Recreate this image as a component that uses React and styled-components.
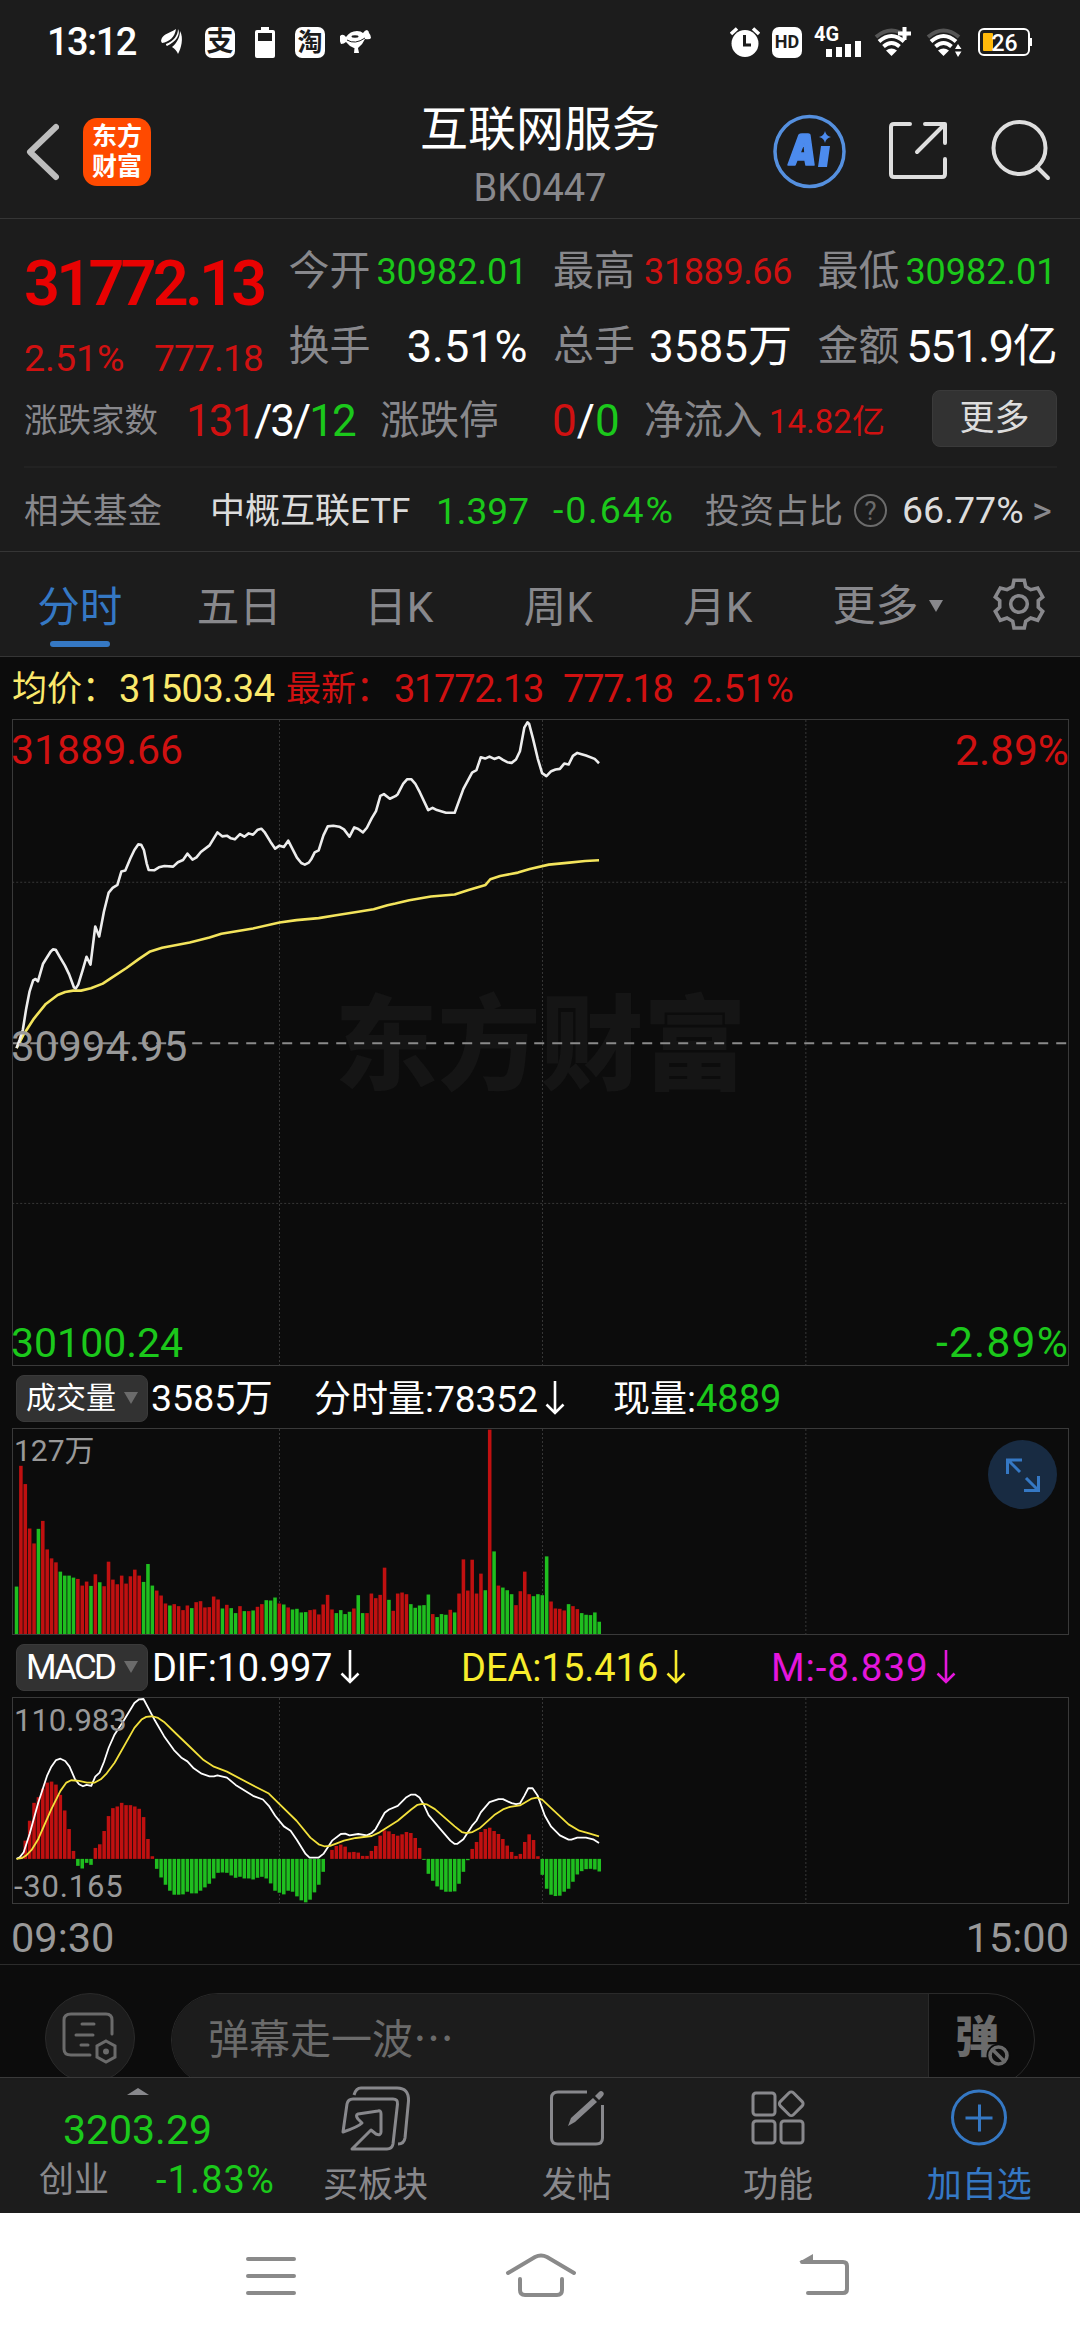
import React, { useState } from "react";
import styled, { createGlobalStyle } from "styled-components";

const red = "#d01111";
const green = "#1bc81b";
const grey = "#88888c";
const blue = "#3578c4";
const line = "#3a3a3a";

const GlobalStyle = createGlobalStyle`
  * {
    box-sizing: border-box;
  }

  body {
    margin: 0;
    background: #0c0c0c;
    font-family: Roboto, "Noto Sans CJK SC", sans-serif;
    color: #fff;
  }

  svg {
    display: block;
    flex: none;
  }
`;

const Screen = styled.div`
  width: 1080px;
  height: 2340px;
  display: flex;
  flex-direction: column;
  overflow: hidden;
`;

const Txt = styled.span`
  display: inline-block;
  padding-top: 2px;
  color: ${(p) => p.$color || "inherit"};
  font-size: ${(p) => p.$size || 38}px;
  font-weight: ${(p) => p.$weight || 400};
  letter-spacing: ${(p) => p.$track || 0}px;
  line-height: 1;
  white-space: pre;
`;

/* status bar */

const StatusBar = styled.div`
  height: 84px;
  flex: none;
  padding: 0 48px 0 47px;
  display: flex;
  align-items: center;
  justify-content: space-between;
  background: #1c1c1c;
`;

const StatusGroup = styled.div`
  display: flex;
  align-items: center;
  gap: ${(p) => p.$gap}px;
`;

const Clock = styled(Txt)`
  padding-top: 0;
  margin-right: 5px;
`;

const Chip = styled.span`
  width: 30px;
  height: 31px;
  border-radius: 7px;
  background: #fff;
  color: #1c1c1c;
  display: flex;
  align-items: center;
  justify-content: center;
  font-size: ${(p) => p.$size}px;
  font-weight: 700;
  line-height: 1;
`;

const DogIcon = styled.svg`
  margin-left: -5px;
`;

const WifiIcon = styled.svg`
  margin-right: 3px;
`;

/* header */

const Header = styled.header`
  height: 135px;
  flex: none;
  display: grid;
  grid-template-columns: 400px 280px 400px;
  background: #1c1c1c;
  border-bottom: 1px solid #353535;
`;

const HeaderLeft = styled.div`
  display: flex;
  gap: 24px;
  padding: 34px 0 0 26px;
`;

const Logo = styled.div`
  width: 68px;
  height: 68px;
  border-radius: 14px;
  background: #ff4a00;
  display: flex;
  align-items: center;
  justify-content: center;
  font-size: 25px;
  font-weight: 700;
  line-height: 30px;
  text-align: center;
`;

const Titles = styled.div`
  display: flex;
  flex-direction: column;
  align-items: center;
  gap: 13px;
  padding-top: 20px;
`;

const HeaderRight = styled.div`
  display: flex;
  justify-content: flex-end;
  gap: 42px;
  padding: 30px 29px 0 0;
`;

/* quote panel */

const Quote = styled.section`
  height: 333px;
  flex: none;
  padding: 0 23px 0 24px;
  background: #1c1c1c;
  border-bottom: 1px solid #353535;
`;

const QuoteTop = styled.div`
  height: 165px;
  display: grid;
  grid-template-columns: 239px repeat(3, 239px);
  column-gap: 25.5px;
`;

const PriceBlock = styled.div`
  padding-top: 31px;
`;

const ChangeRow = styled.div`
  display: flex;
  justify-content: space-between;
  margin-top: 23px;
`;

const StatColumn = styled.div`
  display: flex;
  flex-direction: column;
  padding-top: 14px;
`;

const Stat = styled.div`
  height: 75px;
  display: flex;
  align-items: center;
  justify-content: space-between;
`;

const QuoteRow = styled.div`
  height: 84px;
  display: flex;
  align-items: center;
  border-bottom: ${(p) => (p.$ruled ? "2px solid #222" : "none")};
  padding-bottom: ${(p) => (p.$ruled ? 10 : 0)}px;
`;

const Cell = styled.div`
  width: ${(p) => p.$w}px;
  margin-left: ${(p) => p.$ml || 0}px;
  flex: none;
  display: flex;
  align-items: center;
`;

const MoreButton = styled.button`
  width: 125px;
  height: 57px;
  margin: -3px 0 0 auto;
  padding: 0;
  border: 1px solid #3a3a3a;
  border-radius: 8px;
  background: #323232;
  color: #ddd;
  font: 35px/53px Roboto, "Noto Sans CJK SC", sans-serif;
`;

const Help = styled.span`
  width: 33px;
  height: 33px;
  border: 2px solid #6b6b6b;
  border-radius: 50%;
  color: #6b6b6b;
  font-size: 26px;
  line-height: 30px;
  text-align: center;
`;

/* period tabs */

const Tabs = styled.nav`
  height: 105px;
  flex: none;
  display: flex;
  background: #1c1c1c;
  border-bottom: 1px solid #353535;
`;

const Tab = styled.button`
  width: 159.5px;
  padding: 35px 0 0;
  border: 0;
  background: none;
  display: flex;
  flex-direction: column;
  align-items: center;
  gap: 12px;
  font: 42.5px/42px Roboto, "Noto Sans CJK SC", sans-serif;
  color: ${(p) => (p.$active ? blue : grey)};

  &::after {
    content: "";
    width: 60px;
    height: 6px;
    border-radius: 3px;
    background: ${(p) => (p.$active ? blue : "transparent")};
  }
`;

const MoreTab = styled.div`
  display: flex;
  align-items: center;
  gap: 10px;
  padding: 4px 0 0 35px;
  font-size: 43px;
  line-height: 43px;
  color: ${grey};
`;

const GearWrap = styled.div`
  margin: 26px 35px 0 auto;
`;

/* charts */

const Legend = styled.div`
  height: ${(p) => p.$h || 62}px;
  flex: none;
  display: flex;
  align-items: center;
  padding: ${(p) => p.$drop || 0}px 0 0 ${(p) => p.$left}px;
`;

const Pill = styled.button`
  width: 132px;
  height: 47px;
  padding: 0 9px 0 9px;
  border: 1px solid #3a3a3a;
  border-radius: 8px;
  background: #323232;
  color: #fff;
  display: flex;
  align-items: center;
  justify-content: space-between;
  font: ${(p) => p.$size}px/1 Roboto, "Noto Sans CJK SC", sans-serif;
  letter-spacing: ${(p) => p.$track || 0}px;
`;

const Triangle = styled.i`
  width: 0;
  border-left: ${(p) => p.$w / 2}px solid transparent;
  border-right: ${(p) => p.$w / 2}px solid transparent;
  border-top: ${(p) => (p.$up ? 0 : p.$h)}px solid ${(p) => p.$color};
  border-bottom: ${(p) => (p.$up ? p.$h : 0)}px solid ${(p) => p.$color};
`;

const Plot = styled.div`
  position: relative;
  height: ${(p) => p.$h}px;
  flex: none;
  margin: 0 11px 0 12px;
  border: 1px solid ${line};

  > svg {
    position: relative;
    width: 100%;
    height: 100%;
  }
`;

const Tag = styled.span`
  position: absolute;
  ${(p) => (p.$right ? "right: -1px;" : `left: ${p.$left || -2}px;`)}
  top: ${(p) => p.$top}px;
  font-size: ${(p) => p.$size}px;
  letter-spacing: ${(p) => p.$track || 0}px;
  line-height: 1;
  color: ${(p) => p.$color};
`;

const Watermark = styled.div`
  position: absolute;
  left: 0;
  right: 0;
  top: 268px;
  text-align: center;
  font-size: 103px;
  font-weight: 900;
  line-height: 1.15;
  color: #151515;
`;

const Expand = styled.button`
  position: absolute;
  top: 11px;
  right: 11px;
  width: 69px;
  height: 69px;
  padding: 0;
  border: 0;
  border-radius: 50%;
  background: #182b42;
  display: grid;
  place-items: center;
`;

const TimeAxis = styled.div`
  height: 61px;
  flex: none;
  display: flex;
  align-items: center;
  justify-content: space-between;
  padding: 5px 11px 0;
  color: #999;
  border-bottom: 1px solid #2c2c2c;
`;

/* comment bar */

const Comments = styled.div`
  height: 112px;
  flex: none;
  overflow: hidden;
  display: flex;
  gap: 36px;
  padding: 28px 45px 0;
`;

const RoundButton = styled.div`
  width: 90px;
  height: 90px;
  border: 1px solid #2a2a2a;
  border-radius: 50%;
  background: #1c1c1c;
  display: grid;
  place-items: center;
`;

const CommentBox = styled.div`
  width: 864px;
  height: 94px;
  display: flex;
  overflow: hidden;
  border: 1px solid #2a2a2a;
  border-radius: 47px;
`;

const CommentInput = styled.div`
  width: 757px;
  padding: 24px 0 0 36px;
  background: #1c1c1c;
  border-right: 1px solid #2a2a2a;
  color: #6b6b6b;
`;

const Barrage = styled.div`
  position: relative;
  padding: 20px 0 0 26px;
  color: #6b6b6b;

  svg {
    position: absolute;
    left: 57px;
    top: 49px;
  }
`;

/* bottom bars */

const BottomBar = styled.div`
  height: 136px;
  flex: none;
  display: grid;
  grid-template-columns: 275px repeat(4, 201.25px);
  background: #1c1c1c;
  border-top: 1px solid #3a3a3a;
`;

const IndexBox = styled.div`
  display: flex;
  flex-direction: column;
  align-items: center;
  gap: 13px;
  padding-top: 10px;
`;

const IndexRow = styled.div`
  width: 236px;
  margin: -5px 0 0 39px;
  display: flex;
  justify-content: space-between;
  align-items: center;
`;

const Action = styled.div`
  display: flex;
  flex-direction: column;
  align-items: center;
  color: ${(p) => p.$color || grey};
  padding-top: 8px;
  gap: 14px;
`;

const SystemNav = styled.div`
  flex: 1;
  background: #fff;
  display: grid;
  grid-template-columns: 270px 270px 295px;
  justify-items: center;
  padding: 37px 0 0 136px;
`;

// The plots share one grid: 240 minutes over 2668 units, 11.08 units a minute
const STEP = 11.08;
const FIRST = 42;

// Volume per minute, negative where the price fell
const volumes = [
  -143, 507, 452, 318, 273, -317, 341, 255, 228, 216, -188, -176, -176, -170,
  166, 146, 158, -145, 180, -156, 144, 218, 164, 150, 176, 152, 174, 194, 176,
  -157, -211, -146, 131, 116, 92, -86, 90, 84, 72, 86, -78, 96, 99, 80, 81, 113,
  104, -77, 88, -78, -63, 84, -69, 69, -71, 82, 90, -102, -101, -110, 92, -89,
  80, -74, -76, -65, -66, 72, 74, 59, 89, 118, 74, -63, -72, -60, -67, 77, -117,
  -63, 63, 122, 108, 118, 200, -103, 70, 122, 125, 120, -90, -79, -86, -87,
  -119, 60, -51, -60, -58, 73, -65, 122, 225, 131, 224, 122, 182, -132, 616,
  -249, 146, -140, -132, -120, 87, 129, 188, 120, -114, -120, -117, -234, 98,
  77, 76, 71, -90, 84, 75, -63, -58, -57, -65, -37,
];

const histogram = [
  0, 8, 55, 115, 169, 186, 212, 230, 233, 224, 193, 146, 90, 24, -21, -29, -12,
  -18, 33, 44, 84, 129, 153, 158, 169, 162, 162, 158, 151, 126, 60, 8, -30, -56,
  -78, -96, -108, -108, -107, -99, -104, -104, -96, -86, -75, -59, -42, -41,
  -42, -50, -57, -54, -59, -59, -62, -57, -54, -59, -74, -96, -102, -107, -96,
  -99, -113, -125, -131, -123, -101, -78, -39, 0, 27, 39, 43, 37, 20, 21, 19, 9,
  9, 24, 39, 70, 86, 83, 75, 70, 74, 81, 78, 63, 33, -3, -45, -66, -83, -93,
  -99, -99, -98, -75, -39, -4, 30, 51, 81, 90, 94, 84, 75, 60, 40, 21, 9, 15,
  51, 74, 57, 8, -48, -90, -108, -112, -111, -99, -90, -69, -47, -37, -31, -30,
  -32, -38,
];

const pricePoints =
  "42,1046 50,1020 58,990 66,930 75,875 84,842 90,838 96,845 101,825 109,792 118,775 128,756 134,749 141,750 152,773 164,797 175,824 187,863 192,866 198,855 209,812 219,771 229,795 241,680 251,710 263,635 275,578 285,564 297,555 307,515 317,512 330,475 340,450 350,433 357,434 364,450 371,490 376,510 390,511 402,502 416,498 438,500 450,487 463,480 474,461 487,479 497,472 508,456 530,436 550,397 562,409 574,407 584,415 594,418 607,402 618,410 629,400 640,404 652,389 661,386 669,396 684,425 696,446 707,437 718,441 729,422 739,445 751,473 762,489 771,494 781,488 788,476 796,457 806,451 818,406 829,379 843,377 858,380 870,388 884,410 896,382 906,387 918,397 928,383 940,355 951,333 962,287 971,282 986,296 1000,288 1006,282 1020,250 1030,237 1040,237 1050,250 1062,277 1083,330 1094,323 1105,330 1128,338 1150,338 1172,266 1194,217 1205,210 1216,171 1227,175 1238,169 1250,176 1262,171 1272,179 1283,186 1294,188 1305,178 1315,153 1326,82 1334,66 1338,70 1348,115 1360,175 1371,219 1382,228 1394,213 1405,208 1416,206 1427,190 1438,193 1449,167 1460,158 1482,166 1504,176 1515,189";

const averagePoints =
  "42,1046 60,1005 86,957 116,913 146,886 165,877 185,873 205,873 230,866 260,852 280,836 320,805 350,779 380,755 410,744 480,728 530,713 560,702 640,686 707,668 750,661 806,655 850,646 906,636 945,628 980,616 1000,611 1035,601 1090,590 1150,584 1185,570 1228,555 1240,538 1265,528 1310,518 1340,507 1388,494 1440,488 1480,483 1515,481";

const difPoints =
  "42,660 50,655 60,640 75,585 97,490 119,410 130,382 142,362 153,358 165,365 176,382 190,420 200,435 210,441 219,437 231,440 241,412 252,400 263,368 275,325 290,285 312,245 340,190 352,179 363,178 375,205 392,243 415,290 440,332 460,356 474,366 490,387 510,403 530,411 541,411 550,408 574,415 596,437 640,470 665,481 680,500 696,530 718,562 735,575 751,603 773,645 783,656 806,656 818,645 840,605 862,585 873,584 884,589 906,585 928,589 940,582 950,570 973,521 984,511 1006,500 1028,474 1040,466 1050,466 1061,475 1072,497 1084,528 1110,565 1139,605 1150,615 1156,615 1172,601 1194,560 1205,545 1216,520 1238,489 1261,480 1272,480 1294,492 1305,495 1315,493 1326,470 1336,447 1347,447 1360,470 1378,530 1394,563 1416,589 1438,602 1445,602 1460,596 1482,596 1500,601 1515,612";

const deaPoints =
  "42,660 55,658 66,650 80,633 97,600 130,510 153,455 168,430 180,423 200,425 220,430 240,430 255,420 270,402 290,370 340,265 358,240 370,232 385,230 400,235 415,247 445,282 480,322 515,362 541,382 574,397 650,445 680,463 707,495 750,545 785,596 806,616 820,622 835,621 870,605 900,597 940,591 960,580 1006,545 1040,511 1056,497 1068,494 1080,496 1100,510 1150,562 1168,579 1180,582 1195,579 1215,566 1250,528 1272,511 1290,503 1315,499 1345,478 1358,475 1372,482 1394,507 1438,556 1465,575 1490,583 1515,592";

const Rule = styled.line`
  stroke: ${(p) => p.$color || "#383838"};
  stroke-width: ${(p) => p.$width || 1}px;
  stroke-dasharray: ${(p) => p.$dash || "2 2"};
  vector-effect: non-scaling-stroke;
`;

const Grid = ({ top, height }) =>
  [707, 1372, 2038].map((x) => (
    <Rule key={x} x1={x} x2={x} y1={top} y2={top + height} />
  ));

const Curve = ({ points, color, width }) => (
  <polyline
    points={points}
    fill="none"
    stroke={color}
    strokeWidth={width}
    strokeLinejoin="round"
    vectorEffect="non-scaling-stroke"
  />
);

const Bars = ({ values, base, signed }) =>
  values.map((v, i) => (
    <rect
      key={i}
      x={FIRST + i * STEP - 4.6}
      y={signed && v < 0 ? base : base - Math.abs(v)}
      width="9"
      height={Math.abs(v)}
      fill={v < 0 ? "#1fbe1f" : "#c01010"}
    />
  ));

const ArrowSvg = styled.svg`
  margin-left: ${(p) => p.$gap}px;
`;

const DownArrow = ({ color = "#fff", gap = 10 }) => (
  <ArrowSvg $gap={gap} width="20" height="34" viewBox="0 0 20 34" fill="none" stroke={color} strokeWidth="2.6">
    <path d="M10 0V31M1.5 23.5L10 32L18.5 23.5" />
  </ArrowSvg>
);

const StatusLeftIcons = () => (
  <>
    <svg width="24" height="26" viewBox="0 0 24 26" fill="#fff">
      <path d="M0 12C1 5 7 5 15 0C14 8 8 13 1 14Z" />
      <path d="M17 0C20 5 15 13 6 17C5 16 5 16 5 15C13 12 17 6 17 0Z" />
      <path d="M19 2C23 9 20 20 17 25C16 22 14 20 11 18C16 14 19 8 19 2Z" />
    </svg>
    <Chip $size={27}>支</Chip>
    <svg width="20" height="31" viewBox="0 0 20 31">
      <path d="M6 0H14V3H18Q20 3 20 5V29Q20 31 18 31H2Q0 31 0 29V5Q0 3 2 3H6Z" fill="#fff" />
      <path d="M3 6H17V14H3Z" fill="#1c1c1c" />
    </svg>
    <Chip $size={25}>淘</Chip>
    <DogIcon width="31" height="24" viewBox="0 0 31 24" fill="#fff">
      <path d="M0 6Q3 3 6 7Q10 1 17 1Q21 1 23 3Q25 0 27 0Q29 1 29 3Q31 5 31 8Q30 10 25 9Q23 14 18 18H14Q9 16 6 12Q4 14 1 14Q-1 10 0 6Z" />
      <path d="M7 10Q15 15 25 8" fill="none" stroke="#1c1c1c" />
      <ellipse cx="15" cy="6.500" rx="3.500" ry="1.200" fill="#1c1c1c" />
      <path d="M14.500 18H18L19 23H14Z" />
    </DogIcon>
  </>
);

const Wifi = ({ plus }) => (
  <WifiIcon as={plus ? "svg" : undefined} width="37" height="32" viewBox="0 0 37 32" fill="none" strokeWidth="4">
    <path d="M2 11Q17.500 -2 33 11" stroke="#555" />
    <path d="M5 15.500Q17.500 4.500 30 15.500" stroke="#fff" />
    <path d="M9.500 20.500Q17.500 13.500 25.500 20.500" stroke="#fff" />
    <path d="M17.500 30L12 24.500Q17.500 20.500 23 24.500Z" fill="#fff" />
    {plus ? (
      <path d="M24 7.500H37M30.500 1V14" stroke="#fff" />
    ) : (
      <path d="M29 23L32 18L35.500 23ZM29 25.500L32 31L35.500 25.500Z" fill="#fff" />
    )}
  </WifiIcon>
);

const StatusRightIcons = () => (
  <>
    <svg width="30" height="30" viewBox="0 0 30 30">
      <circle cx="15" cy="16.500" r="13.500" fill="#fff" />
      <path d="M1 7L7 1.500M29 7L23 1.500" stroke="#fff" strokeWidth="3.500" />
      <path d="M14.500 8V18H21" fill="none" stroke="#1c1c1c" strokeWidth="3" />
    </svg>
    <Chip $size={18}>HD</Chip>
    <svg width="48" height="40" viewBox="0 -4 48 40" fill="#fff">
      <text x="0" y="15" fontSize="20" fontWeight="700" fontFamily="Roboto">
        4G
      </text>
      <path d="M12 23h6v8h-6zM22 21h6v10h-6zM31 18h6v13h-6zM41 15h6v16h-6z" />
    </svg>
    <Wifi plus />
    <Wifi />
    <svg width="54" height="28" viewBox="0 0 54 28">
      <rect x="1" y="1" width="50" height="26" rx="5" fill="none" stroke="#fff" strokeWidth="2" />
      <rect x="5" y="5" width="10" height="18" rx="1" fill="#ffb90a" />
      <path d="M53 10V18" stroke="#fff" strokeWidth="2" />
      <text x="13.500" y="22.500" fontSize="23" fontWeight="500" fontFamily="Roboto" fill="#fff">
        26
      </text>
    </svg>
  </>
);

const BackIcon = () => (
  <svg width="33" height="68" viewBox="0 0 33 68">
    <path d="M30 9L4 34L30 59" fill="none" stroke="#bdbdbd" strokeWidth="6" strokeLinecap="round" strokeLinejoin="round" />
  </svg>
);

const AiIcon = () => (
  <svg width="73" height="75" viewBox="0 0 73 75" fill="#4c8bee">
    <ellipse cx="36.500" cy="37.500" rx="34.500" ry="35" fill="none" stroke="#5590df" strokeWidth="3.500" />
    <path
      fillRule="evenodd"
      stroke="#4c8bee"
      strokeWidth="1.500"
      strokeLinejoin="round"
      d="M15 51L26 21Q27 20 29 20H35Q37 20 37 22L41 51H33L32 46H24L22 51ZM27 39H32L31 29Z"
    />
    <path d="M48 32H57L54 53H45ZM52 17Q53 22 58 23Q53 24 52 29Q51 24 46 23Q51 22 52 17Z" />
  </svg>
);

const ShareIcon = () => (
  <svg width="60" height="75" viewBox="0 0 60 75" fill="none" stroke="#dedede" strokeWidth="4" strokeLinecap="round" strokeLinejoin="round">
    <path d="M22 10H6Q3 10 3 13V60Q3 63 6 63H54Q57 63 57 60V45M37 10H57V29M56 11L29 38" />
  </svg>
);

const SearchIcon = () => (
  <svg width="61" height="75" viewBox="0 0 61 75" fill="none" stroke="#dedede" strokeWidth="4" strokeLinecap="round">
    <circle cx="29.500" cy="34" r="26" />
    <path d="M47 53L58 64" />
  </svg>
);

const GearIcon = () => (
  <svg width="52" height="52" viewBox="0 0 52 52" fill="none" stroke={grey} strokeWidth="3.600">
    <path d="M21 2.300H31.300L32.700 8.700L37.700 11.700L44.700 10L49.700 19L45.300 22.700V29.300L49.700 33.300L44.700 42.300L37.700 40L32.700 43.300L31.300 50H21L19.700 43.300L14 40L7.300 42.300L2.300 33.300L6.700 29.300V22.700L2.300 19L7.300 10L14 11.700L19.700 8.700Z" />
    <circle cx="26" cy="26" r="8.300" />
  </svg>
);

const ExpandIcon = () => (
  <svg width="36" height="36" viewBox="0 0 36 36" fill="none" stroke={blue} strokeWidth="3">
    <path d="M2.500 17V3H17M3 3L15 15M21 21L33 33M19 33.500H33.500V19" />
  </svg>
);

const NoteIcon = () => (
  <svg width="56" height="52" viewBox="0 0 56 52" fill="none" stroke="#6b6b6b" strokeWidth="3" strokeLinecap="round">
    <path d="M50 22V8Q50 2 44 2H9Q2 2 2 8V37Q2 43 9 43H28M20 12H32M14 23H31M19 33H26" />
    <path d="M44 29L53 34V45L44 50L35 45V34Z" />
    <circle cx="44" cy="39.500" r="1.500" />
  </svg>
);

const BuyIcon = () => (
  <svg width="70" height="66" viewBox="0 0 70 66" fill="none" stroke={grey} strokeWidth="3" strokeLinejoin="round">
    <path d="M13 9Q15 2 20 2H56Q68 2 67.500 15L64 52Q63 58 57 58" />
    <path d="M2 46L6 18Q7 13 12 13H52Q57 13 56.500 18L52 58Q51 63 46 63H11L30 44L35 48Q40 50 40 46V28Q40 24 37 25L17 28Q14 29 17 33L21 37Q17 41 2 46Z" />
  </svg>
);

const PostIcon = () => (
  <svg width="56" height="66" viewBox="0 0 56 66" fill="none" stroke={grey} strokeWidth="3">
    <path d="M38 6H9Q2.500 6 2.500 12V52Q2.500 58 9 58H47Q53.500 58 53.500 52V19" />
    <path d="M19 40L22 32L44 12L48 16L26 36Z M46 10L50 6Q52 4 54 6Q56 8 53 11L50 14Z" fill={grey} stroke="none" />
  </svg>
);

const AppsIcon = () => (
  <svg width="54" height="66" viewBox="0 0 54 66" fill="none" stroke={grey} strokeWidth="3">
    <rect x="2" y="7" width="22" height="22" rx="3" />
    <rect x="2" y="35" width="22" height="22" rx="3" />
    <rect x="30" y="35" width="22" height="22" rx="3" />
    <rect x="31" y="8.500" width="18.500" height="18.500" rx="3" transform="rotate(45 40.250 17.750)" />
  </svg>
);

const AddIcon = () => (
  <svg width="58" height="66" viewBox="0 0 58 66" fill="none" stroke={blue} strokeWidth="3">
    <circle cx="29" cy="31.500" r="26.500" />
    <path d="M15.500 32H42.500M29.500 18.500V45.500" />
  </svg>
);

const periods = ["分时", "五日", "日K", "周K", "月K"];

const App = () => {
  const [period, setPeriod] = useState("分时");

  return (
    <>
      <GlobalStyle />
      <Screen>
        <StatusBar>
          <StatusGroup $gap={20}>
            <Clock $size={38} $weight={500} $track={-1.5}>
              13:12
            </Clock>
            <StatusLeftIcons />
          </StatusGroup>
          <StatusGroup $gap={12}>
            <StatusRightIcons />
          </StatusGroup>
        </StatusBar>

        <Header>
          <HeaderLeft>
            <BackIcon />
            <Logo>
              东方
              <br />
              财富
            </Logo>
          </HeaderLeft>
          <Titles>
            <Txt $size={48}>互联网服务</Txt>
            <Txt $size={38} $color={grey}>
              BK0447
            </Txt>
          </Titles>
          <HeaderRight>
            <AiIcon />
            <ShareIcon />
            <SearchIcon />
          </HeaderRight>
        </Header>

        <Quote>
          <QuoteTop>
            <PriceBlock>
              <Txt $size={63} $weight={600} $color="#e80202" $track={-3.8}>
                31772.13
              </Txt>
              <ChangeRow>
                <Txt $size={37.5} $color={red}>
                  2.51%
                </Txt>
                <Txt $size={37} $color={red} $track={-0.8}>
                  777.18
                </Txt>
              </ChangeRow>
            </PriceBlock>
            <StatColumn>
              <Stat>
                <Txt $size={41} $color={grey}>今开</Txt>
                <Txt $size={36} $color={green}>30982.01</Txt>
              </Stat>
              <Stat>
                <Txt $size={41} $color={grey}>换手</Txt>
                <Txt $size={45}>3.51%</Txt>
              </Stat>
            </StatColumn>
            <StatColumn>
              <Stat>
                <Txt $size={41} $color={grey}>最高</Txt>
                <Txt $size={36} $color={red} $track={-0.4}>31889.66</Txt>
              </Stat>
              <Stat>
                <Txt $size={41} $color={grey}>总手</Txt>
                <Txt $size={44}>3585万</Txt>
              </Stat>
            </StatColumn>
            <StatColumn>
              <Stat>
                <Txt $size={41} $color={grey}>最低</Txt>
                <Txt $size={36} $color={green}>30982.01</Txt>
              </Stat>
              <Stat>
                <Txt $size={41} $color={grey}>金额</Txt>
                <Txt $size={45} $track={-1.3}>551.9亿</Txt>
              </Stat>
            </StatColumn>
          </QuoteTop>

          <QuoteRow $ruled>
            <Cell $w={162}>
              <Txt $size={33.5} $color={grey}>涨跌家数</Txt>
            </Cell>
            <Cell $w={194}>
              <Txt $size={44} $color={red} $track={-2}>131</Txt>
              <Txt $size={44} $track={-2}>/3/</Txt>
              <Txt $size={44} $color={green} $track={-2}>12</Txt>
            </Cell>
            <Cell $w={172}>
              <Txt $size={39.5} $color={grey}>涨跌停</Txt>
            </Cell>
            <Cell $w={92}>
              <Txt $size={44} $color={red}>0</Txt>
              <Txt $size={44}>/</Txt>
              <Txt $size={44} $color={green}>0</Txt>
            </Cell>
            <Cell $w={125}>
              <Txt $size={39.5} $color={grey}>净流入</Txt>
            </Cell>
            <Txt $size={33} $color={red}>14.82亿</Txt>
            <MoreButton>更多</MoreButton>
          </QuoteRow>

          <QuoteRow>
            <Cell $w={186}>
              <Txt $size={34.5} $color={grey}>相关基金</Txt>
            </Cell>
            <Cell $w={226}>
              <Txt $size={35} $color="#dcdcdc">中概互联ETF</Txt>
            </Cell>
            <Cell $w={117}>
              <Txt $size={37} $color={green}>1.397</Txt>
            </Cell>
            <Cell $w={152}>
              <Txt $size={37.5} $color={green} $track={1.8}>-0.64%</Txt>
            </Cell>
            <Cell $w={149}>
              <Txt $size={34.5} $color={grey}>投资占比</Txt>
            </Cell>
            <Cell $w={48}>
              <Help>?</Help>
            </Cell>
            <Cell $w={130}>
              <Txt $size={37.5} $color="#dcdcdc">66.77%</Txt>
            </Cell>
            <Txt $size={38} $color={grey}>&gt;</Txt>
          </QuoteRow>
        </Quote>

        <Tabs>
          {periods.map((name) => (
            <Tab key={name} $active={name === period} onClick={() => setPeriod(name)}>
              {name}
            </Tab>
          ))}
          <MoreTab>
            更多
            <Triangle $w={15} $h={12} $color={grey} />
          </MoreTab>
          <GearWrap>
            <GearIcon />
          </GearWrap>
        </Tabs>

        <Legend $left={12} $h={62}>
          <Cell $w={107}>
            <Txt $size={35} $color="#fbe96c">均价：</Txt>
          </Cell>
          <Cell $w={167}>
            <Txt $size={38} $color="#fbe96c" $track={-0.5}>31503.34</Txt>
          </Cell>
          <Cell $w={108}>
            <Txt $size={35} $color={red}>最新：</Txt>
          </Cell>
          <Cell $w={169}>
            <Txt $size={38} $color={red} $track={-1.3}>31772.13</Txt>
          </Cell>
          <Cell $w={129}>
            <Txt $size={38} $color={red} $track={-1.2}>777.18</Txt>
          </Cell>
          <Txt $size={38} $color={red}>2.51%</Txt>
        </Legend>

        <Plot $h={647}>
          <Watermark>东方财富</Watermark>
          <svg viewBox="33 59 2668 1940" preserveAspectRatio="none">
            <Grid top={59} height={1940} />
            <Rule x1="31" x2="2702" y1="547" y2="547" />
            <Rule x1="31" x2="2702" y1="1513" y2="1513" />
            <Rule x1="31" x2="2702" y1="1031" y2="1031" $color="#8a8a8a" $width={2} $dash="10 8" />
            <Curve points={averagePoints} color="#f3e45c" width={2.6} />
            <Curve points={pricePoints} color="#ededed" width={2.6} />
          </svg>
          <Tag $top={10} $size={41} $color={red}>31889.66</Tag>
          <Tag $top={10} $size={42.5} $color={red} $right>2.89%</Tag>
          <Tag $top={306} $size={42} $color="#999">30994.95</Tag>
          <Tag $top={603} $size={41} $color={green}>30100.24</Tag>
          <Tag $top={602} $size={42.5} $color={green} $track={1.2} $right>-2.89%</Tag>
        </Plot>

        <Legend $left={16} $drop={2}>
          <Pill $size={30}>
            成交量
            <Triangle $w={15} $h={12} $color="#6b6b6b" />
          </Pill>
          <Cell $w={163} $ml={3}>
            <Txt $size={37.5}>3585万</Txt>
          </Cell>
          <Cell $w={299}>
            <Txt $size={37}>分时量:78352</Txt>
            <DownArrow gap={7} />
          </Cell>
          <Txt $size={37}>现量:</Txt>
          <Txt $size={38} $color={green}>4889</Txt>
        </Legend>

        <Plot $h={207}>
          <svg viewBox="33 298 2668 618" preserveAspectRatio="none">
            <Grid top={298} height={618} />
            <Bars values={volumes} base={916} />
          </svg>
          <Tag $top={7} $size={30} $color="#999" $left={1}>127万</Tag>
          <Expand>
            <ExpandIcon />
          </Expand>
        </Plot>

        <Legend $left={16} $drop={2}>
          <Pill $size={35} $track={-2.8}>
            MACD
            <Triangle $w={15} $h={12} $color="#6b6b6b" />
          </Pill>
          <Cell $w={309} $ml={4}>
            <Txt $size={38} $track={-0.2}>DIF:10.997</Txt>
            <DownArrow gap={8} />
          </Cell>
          <Cell $w={310}>
            <Txt $size={38} $color="#f8ec2c">DEA:15.416</Txt>
            <DownArrow color="#f8ec2c" gap={8} />
          </Cell>
          <Txt $size={38.5} $color="#e416dc" $track={0.9}>M:-8.839</Txt>
          <DownArrow color="#e416dc" gap={8} />
        </Legend>

        <Plot $h={207}>
          <svg viewBox="33 175 2668 618" preserveAspectRatio="none">
            <Grid top={175} height={618} />
            <Bars values={histogram} base={660} signed />
            <Curve points={difPoints} color="#fff" width={1.8} />
            <Curve points={deaPoints} color="#f3e13c" width={1.8} />
          </svg>
          <Tag $top={7} $size={31} $color="#999" $left={1}>110.983</Tag>
          <Tag $top={173} $size={31} $color="#999" $track={0.8} $left={1}>-30.165</Tag>
        </Plot>

        <TimeAxis>
          <Txt $size={41.5}>09:30</Txt>
          <Txt $size={41.5}>15:00</Txt>
        </TimeAxis>

        <Comments>
          <RoundButton>
            <NoteIcon />
          </RoundButton>
          <CommentBox>
            <CommentInput>
              <Txt $size={41}>弹幕走一波⋯</Txt>
            </CommentInput>
            <Barrage>
              <Txt $size={44} $weight={900}>弹</Txt>
              <svg width="25" height="25" viewBox="0 0 25 25">
                <circle cx="12.500" cy="12.500" r="12" fill="#0c0c0c" />
                <circle cx="12.500" cy="12.500" r="8.500" fill="none" stroke="#6b6b6b" strokeWidth="3.600" />
                <path d="M6.500 6.500L18.500 18.500" stroke="#6b6b6b" strokeWidth="3.600" />
              </svg>
            </Barrage>
          </CommentBox>
        </Comments>

        <BottomBar>
          <IndexBox>
            <Triangle $up $w={22} $h={7} $color={grey} />
            <Txt $size={41} $color={green}>
              3203.29
            </Txt>
            <IndexRow>
              <Txt $size={35} $color={grey}>创业</Txt>
              <Txt $size={38} $color={green} $track={1.1}>-1.83%</Txt>
            </IndexRow>
          </IndexBox>
          <Action>
            <BuyIcon />
            <Txt $size={35}>买板块</Txt>
          </Action>
          <Action>
            <PostIcon />
            <Txt $size={35}>发帖</Txt>
          </Action>
          <Action>
            <AppsIcon />
            <Txt $size={35}>功能</Txt>
          </Action>
          <Action $color={blue}>
            <AddIcon />
            <Txt $size={35}>加自选</Txt>
          </Action>
        </BottomBar>

        <SystemNav>
          <svg width="50" height="50" viewBox="0 0 50 50" stroke="#8a8a8a" strokeWidth="4" strokeLinecap="round">
            <path d="M2 9H48M2 26H48M2 43H48" />
          </svg>
          <svg width="72" height="50" viewBox="0 0 72 50" fill="none" stroke="#8a8a8a" strokeWidth="4" strokeLinecap="round">
            <path d="M3 23L30 7Q36 4 42 7L69 23M15 29V40Q15 45 20 45H52Q57 45 57 40V29" />
          </svg>
          <svg width="52" height="50" viewBox="0 0 52 50" fill="none" stroke="#8a8a8a" strokeWidth="4" strokeLinecap="round">
            <path d="M4 12H45Q49 12 49 16V39Q49 43 45 43H10" />
            <path d="M1 12L15 4V12Z" fill="#8a8a8a" stroke="none" />
          </svg>
        </SystemNav>
      </Screen>
    </>
  );
};

export default App;
